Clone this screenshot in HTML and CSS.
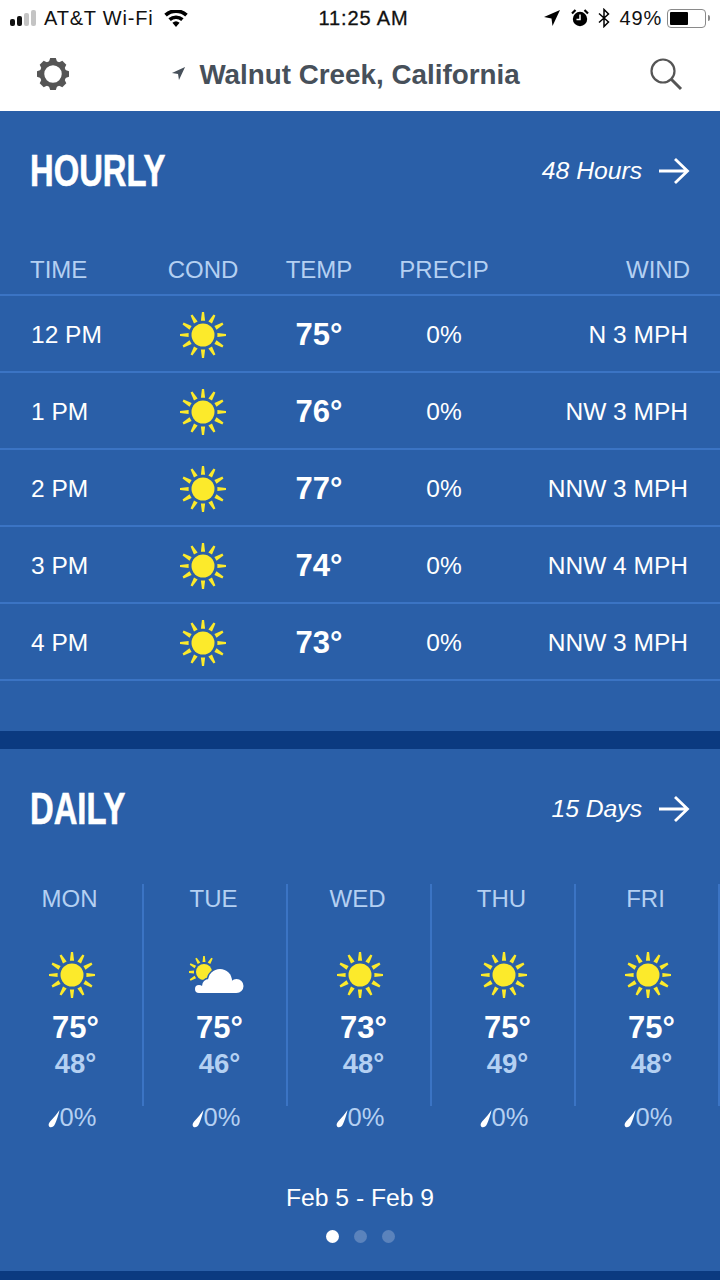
FILE: index.html
```html
<!DOCTYPE html>
<html lang="en">
<head>
    <meta charset="UTF-8">
    <meta name="viewport" content="width=device-width, initial-scale=1.0">
    <title>Weather</title>
    <link rel="stylesheet" href="styles.css">
</head>
<body>
    <svg class="defs" width="0" height="0">
        <symbol id="sun" viewBox="-24 -24 48 48">
            <circle r="12" fill="#fcea2b"/>
            <g fill="#fcea2b">
                <path d="M-2.200 -15H2.200L1.100 -24H-1.100z"/>
                <path d="M-2.200 -15H2.200L1.100 -24H-1.100z" transform="rotate(30)"/>
                <path d="M-2.200 -15H2.200L1.100 -24H-1.100z" transform="rotate(60)"/>
                <path d="M-2.200 -15H2.200L1.100 -24H-1.100z" transform="rotate(90)"/>
                <path d="M-2.200 -15H2.200L1.100 -24H-1.100z" transform="rotate(120)"/>
                <path d="M-2.200 -15H2.200L1.100 -24H-1.100z" transform="rotate(150)"/>
                <path d="M-2.200 -15H2.200L1.100 -24H-1.100z" transform="rotate(180)"/>
                <path d="M-2.200 -15H2.200L1.100 -24H-1.100z" transform="rotate(210)"/>
                <path d="M-2.200 -15H2.200L1.100 -24H-1.100z" transform="rotate(240)"/>
                <path d="M-2.200 -15H2.200L1.100 -24H-1.100z" transform="rotate(270)"/>
                <path d="M-2.200 -15H2.200L1.100 -24H-1.100z" transform="rotate(300)"/>
                <path d="M-2.200 -15H2.200L1.100 -24H-1.100z" transform="rotate(330)"/>
            </g>
        </symbol>
        <symbol id="partly" viewBox="0 0 56 38">
            <g transform="translate(15 16)" fill="#fcea2b">
                <circle r="8"/>
                <path d="M-1.500 -10H1.500L.8 -16H-.8z"/>
                <path d="M-1.500 -10H1.500L.8 -16H-.8z" transform="rotate(30)"/>
                <path d="M-1.500 -10H1.500L.8 -16H-.8z" transform="rotate(-30)"/>
                <path d="M-1.500 -10H1.500L.8 -16H-.8z" transform="rotate(-60)"/>
                <path d="M-1.500 -10H1.500L.8 -16H-.8z" transform="rotate(-90)"/>
                <path d="M-1.500 -10H1.500L.8 -16H-.8z" transform="rotate(-120)"/>
            </g>
            <g fill="#2a5fa8" stroke="#2a5fa8" stroke-width="3">
                <circle cx="47.500" cy="30" r="7"/>
                <circle cx="31" cy="25" r="12"/>
                <circle cx="20" cy="30" r="7"/>
                <circle cx="10" cy="33" r="4"/>
                <rect x="10" y="30" width="37" height="7"/>
            </g>
            <g fill="#fff">
                <circle cx="47.500" cy="30" r="7"/>
                <circle cx="31" cy="25" r="12"/>
                <circle cx="20" cy="30" r="7"/>
                <circle cx="10" cy="33" r="4"/>
                <rect x="10" y="30" width="37" height="7"/>
            </g>
        </symbol>
        <symbol id="drop" viewBox="0 0 12 18">
            <path d="M11.500 0C10.500 5 8.500 11 7 14C5.500 17.500 1.800 18.500 .8 15.800C0 13.500 2 11.500 3.500 10C6 7.500 9.500 3 11.500 0z" fill="#fff"/>
        </symbol>
        <symbol id="arrow" viewBox="0 0 32 28">
            <path d="M1 14H29M17 2L29.500 14L17 26" fill="none" stroke="#fff" stroke-width="2.800"/>
        </symbol>
    </svg>

    <div class="status">
        <div class="status-left">
            <span class="signal"><i class="on"></i><i class="on"></i><i></i><i></i></span>
            <span>AT&amp;T Wi-Fi</span>
            <svg class="wifi" viewBox="0 0 24 17" width="24" height="17">
                <path d="M12 17L8.400 12.800a5.500 5.500 0 0 1 7.200 0zM6.800 11L4.400 8.300a11.500 11.500 0 0 1 15.200 0L17.200 11a8 8 0 0 0 -10.400 0zM2.800 6.500L.3 3.700a17.500 17.500 0 0 1 23.400 0L21.200 6.500a14 14 0 0 0 -18.400 0z" fill="#000"/>
            </svg>
        </div>
        <div class="status-time">11:25 AM</div>
        <div class="status-right">
            <svg viewBox="0 0 16 16" width="16" height="16"><path d="M16 0L8.500 16L7.500 8.500L0 7z" fill="#000"/></svg>
            <svg class="alarm" viewBox="0 0 18 18" width="18" height="18">
                <circle cx="9" cy="10" r="7.200" fill="#000"/>
                <path d="M9 5.500V10.500H5.500" fill="none" stroke="#fff" stroke-width="1.500"/>
                <path d="M1 4.500L4.500 1M17 4.500L13.500 1" stroke="#000" stroke-width="2.200"/>
            </svg>
            <svg class="bt" viewBox="0 0 12 20" width="12" height="20"><path d="M1 5.500L10.500 14L6 18.500V1.500L10.500 6L1 14.500" fill="none" stroke="#000" stroke-width="1.500"/></svg>
            <span class="pct">49%</span>
            <span class="battery"><i></i></span>
            <span class="nub"></span>
        </div>
    </div>

    <header class="topbar">
        <svg class="gear" viewBox="-17 -17 34 34" width="34" height="34">
            <circle r="11" fill="none" stroke="#555" stroke-width="4.500"/>
            <g fill="#555">
                <path d="M-4.500 -11L-2.800 -16H2.800L4.500 -11z"/>
                <path d="M-4.500 -11L-2.800 -16H2.800L4.500 -11z" transform="rotate(45)"/>
                <path d="M-4.500 -11L-2.800 -16H2.800L4.500 -11z" transform="rotate(90)"/>
                <path d="M-4.500 -11L-2.800 -16H2.800L4.500 -11z" transform="rotate(135)"/>
                <path d="M-4.500 -11L-2.800 -16H2.800L4.500 -11z" transform="rotate(180)"/>
                <path d="M-4.500 -11L-2.800 -16H2.800L4.500 -11z" transform="rotate(225)"/>
                <path d="M-4.500 -11L-2.800 -16H2.800L4.500 -11z" transform="rotate(270)"/>
                <path d="M-4.500 -11L-2.800 -16H2.800L4.500 -11z" transform="rotate(315)"/>
            </g>
        </svg>
        <div class="place">
            <svg viewBox="0 0 16 16" width="15" height="15"><path d="M15 1L8.500 15L7.500 8.500L1 7.500z" fill="#47505a"/></svg>
            <span>Walnut Creek, California</span>
        </div>
        <svg class="search" viewBox="0 0 34 34" width="34" height="34">
            <circle cx="14" cy="14" r="11.500" fill="none" stroke="#555" stroke-width="2.200"/>
            <path d="M22.500 22.500L32 32" stroke="#555" stroke-width="3"/>
        </svg>
    </header>

    <section class="panel hourly">
        <div class="panel-head">
            <h2>HOURLY</h2>
            <a class="more">48 Hours <svg viewBox="0 0 32 28" width="32" height="28"><use href="#arrow"/></svg></a>
        </div>
        <div class="row head-row">
            <div>TIME</div>
            <div class="mid">COND</div>
            <div class="mid">TEMP</div>
            <div class="mid">PRECIP</div>
            <div class="end">WIND</div>
        </div>
        <div class="row">
            <div class="time">12 PM</div>
            <div class="mid"><svg class="sun" viewBox="0 0 48 48"><use href="#sun"/></svg></div>
            <div class="mid temp">75°</div>
            <div class="mid">0%</div>
            <div class="end wind">N 3 MPH</div>
        </div>
        <div class="row">
            <div class="time">1 PM</div>
            <div class="mid"><svg class="sun" viewBox="0 0 48 48"><use href="#sun"/></svg></div>
            <div class="mid temp">76°</div>
            <div class="mid">0%</div>
            <div class="end wind">NW 3 MPH</div>
        </div>
        <div class="row">
            <div class="time">2 PM</div>
            <div class="mid"><svg class="sun" viewBox="0 0 48 48"><use href="#sun"/></svg></div>
            <div class="mid temp">77°</div>
            <div class="mid">0%</div>
            <div class="end wind">NNW 3 MPH</div>
        </div>
        <div class="row">
            <div class="time">3 PM</div>
            <div class="mid"><svg class="sun" viewBox="0 0 48 48"><use href="#sun"/></svg></div>
            <div class="mid temp">74°</div>
            <div class="mid">0%</div>
            <div class="end wind">NNW 4 MPH</div>
        </div>
        <div class="row">
            <div class="time">4 PM</div>
            <div class="mid"><svg class="sun" viewBox="0 0 48 48"><use href="#sun"/></svg></div>
            <div class="mid temp">73°</div>
            <div class="mid">0%</div>
            <div class="end wind">NNW 3 MPH</div>
        </div>
    </section>

    <section class="panel daily">
        <div class="panel-head">
            <h2>DAILY</h2>
            <a class="more">15 Days <svg viewBox="0 0 32 28" width="32" height="28"><use href="#arrow"/></svg></a>
        </div>
        <div class="days">
            <div class="day">
                <div class="day-top">
                    <div class="day-name">MON</div>
                    <svg class="sun" viewBox="0 0 48 48"><use href="#sun"/></svg>
                    <div class="hi">75°</div>
                    <div class="lo">48°</div>
                </div>
                <div class="rain"><svg viewBox="0 0 12 18" width="12" height="18"><use href="#drop"/></svg>0%</div>
            </div>
            <div class="day">
                <div class="day-top">
                    <div class="day-name">TUE</div>
                    <svg class="cloudy" viewBox="0 0 56 38"><use href="#partly"/></svg>
                    <div class="hi">75°</div>
                    <div class="lo">46°</div>
                </div>
                <div class="rain"><svg viewBox="0 0 12 18" width="12" height="18"><use href="#drop"/></svg>0%</div>
            </div>
            <div class="day">
                <div class="day-top">
                    <div class="day-name">WED</div>
                    <svg class="sun" viewBox="0 0 48 48"><use href="#sun"/></svg>
                    <div class="hi">73°</div>
                    <div class="lo">48°</div>
                </div>
                <div class="rain"><svg viewBox="0 0 12 18" width="12" height="18"><use href="#drop"/></svg>0%</div>
            </div>
            <div class="day">
                <div class="day-top">
                    <div class="day-name">THU</div>
                    <svg class="sun" viewBox="0 0 48 48"><use href="#sun"/></svg>
                    <div class="hi">75°</div>
                    <div class="lo">49°</div>
                </div>
                <div class="rain"><svg viewBox="0 0 12 18" width="12" height="18"><use href="#drop"/></svg>0%</div>
            </div>
            <div class="day">
                <div class="day-top">
                    <div class="day-name">FRI</div>
                    <svg class="sun" viewBox="0 0 48 48"><use href="#sun"/></svg>
                    <div class="hi">75°</div>
                    <div class="lo">48°</div>
                </div>
                <div class="rain"><svg viewBox="0 0 12 18" width="12" height="18"><use href="#drop"/></svg>0%</div>
            </div>
        </div>
        <div class="range">Feb 5 - Feb 9</div>
        <div class="dots"><i class="active"></i><i></i><i></i></div>
    </section>
    <div class="foot-band"></div>
</body>
</html>
```

FILE: styles.css
```css
/* base */
body {
    margin: 0;
    width: 720px;
    height: 1280px;
    overflow: hidden;
    font-family: "Liberation Sans", Arial, sans-serif;
    background-color: #0b3a80;
    color: #fff;
}

.defs {
    position: absolute;
}

/* status bar */
.status {
    height: 36px;
    background-color: #fff;
    color: #111;
    font-size: 20px;
    display: grid;
    grid-template-columns: 1fr auto 1fr;
    align-items: center;
    padding: 0 10px 0 10px;
    box-sizing: border-box;
}

.status-left {
    display: flex;
    align-items: center;
    letter-spacing: 0.8px;
}

.signal {
    display: flex;
    align-items: flex-end;
    gap: 2px;
    margin-right: 8px;
}

.signal i {
    width: 5px;
    background-color: #c4c4c4;
    border-radius: 2px;
}

.signal i:nth-child(1) { height: 7px; }
.signal i:nth-child(2) { height: 10px; }
.signal i:nth-child(3) { height: 13px; }
.signal i:nth-child(4) { height: 16px; }

.signal i.on {
    background-color: #111;
}

.wifi {
    margin-left: 11px;
}

.status-time {
    letter-spacing: 0.9px;
    -webkit-text-stroke: 0.3px #111;
    padding-left: 7px;
}

.status-right {
    display: flex;
    align-items: center;
    justify-content: flex-end;
}

.alarm {
    margin-left: 11px;
}

.bt {
    margin-left: 9px;
}

.pct {
    margin-left: 10px;
    letter-spacing: 0.8px;
}

.battery {
    width: 39px;
    height: 19px;
    margin-left: 5px;
    padding: 2px;
    box-sizing: border-box;
    border: 1px solid #8a8a8a;
    border-radius: 4px;
    display: flex;
}

.battery i {
    width: 18px;
    background-color: #000;
    border-radius: 1px;
}

.nub {
    width: 2px;
    height: 6px;
    margin-left: 2px;
    background-color: #8a8a8a;
    border-radius: 0 2px 2px 0;
}

/* top bar */
.topbar {
    height: 75px;
    background-color: #fff;
    display: flex;
    align-items: center;
    justify-content: space-between;
    padding: 0 37px 0 36px;
    box-sizing: border-box;
}

.place {
    display: flex;
    align-items: center;
    gap: 13px;
    font-size: 27.8px;
    font-weight: bold;
    color: #47505a;
    margin: 2px 28px 0 0;
}

.place svg {
    margin-top: -2px;
}

/* panels */
.panel {
    background-color: #2a5fa8;
}

.hourly {
    height: 620px;
    margin-bottom: 18px;
}

.daily {
    height: 522px;
}

.panel-head {
    height: 48px;
    padding: 36px 30px 0;
    display: flex;
    align-items: center;
    justify-content: space-between;
}

.panel-head h2 {
    margin: 0;
    font-size: 44px;
    font-weight: bold;
    -webkit-text-stroke: 0.6px #fff;
    transform: scaleX(0.745);
    transform-origin: left center;
}

.more {
    display: flex;
    align-items: center;
    gap: 16px;
    font-size: 24.7px;
    font-style: italic;
}

/* hourly table */
.row {
    display: grid;
    grid-template-columns: 109px 126px 106px 144px 172px;
    align-items: center;
    height: 77px;
    padding: 2px 0 0 31px;
    box-sizing: border-box;
    border-bottom: 2px solid #3b74c4;
    font-size: 24.5px;
}

.head-row {
    grid-template-columns: 110px 126px 106px 144px 174px;
    height: 51px;
    margin-top: 50px;
    padding: 0 0 0 30px;
    font-size: 24px;
    color: #b4d0f2;
}

.mid {
    text-align: center;
    display: flex;
    justify-content: center;
}

.end {
    text-align: right;
}

.temp {
    font-size: 31px;
    font-weight: bold;
}

.sun {
    width: 46px;
    height: 46px;
    display: block;
}

/* daily columns */
.days {
    display: flex;
    margin-top: 51px;
}

.day {
    width: 144px;
    flex: none;
}

.day-top {
    height: 222px;
    border-right: 2px solid #3b74c4;
    padding-right: 3px;
    box-sizing: border-box;
    display: flex;
    flex-direction: column;
    align-items: center;
}

.day-top .sun {
    margin-left: 4px;
}

.cloudy {
    width: 56px;
    height: 38px;
    display: block;
    margin: 4px 0 4px 6px;
}

.day-name {
    height: 30px;
    line-height: 30px;
    font-size: 24px;
    color: #b4d0f2;
    margin-bottom: 38px;
}

.hi {
    margin: 12px 0 0 12px;
    height: 36px;
    line-height: 36px;
    font-size: 31px;
    font-weight: bold;
}

.lo {
    margin-left: 12px;
    height: 35px;
    line-height: 35px;
    font-size: 27.5px;
    font-weight: bold;
    color: #b4d0f2;
}

.rain {
    display: flex;
    align-items: center;
    justify-content: center;
    height: 24px;
    margin-top: -1px;
    font-size: 25.5px;
    color: #b4d0f2;
}

.rain svg {
    margin-top: 4px;
}

/* pager */
.range {
    margin-top: 55px;
    text-align: center;
    font-size: 24.7px;
}

.dots {
    display: flex;
    justify-content: center;
    gap: 15px;
    margin-top: 18px;
}

.dots i {
    width: 13px;
    height: 13px;
    border-radius: 50%;
    background-color: #5b83bc;
}

.dots i.active {
    background-color: #fff;
}

.foot-band {
    height: 9px;
    background-color: #0b3a80;
}
```
